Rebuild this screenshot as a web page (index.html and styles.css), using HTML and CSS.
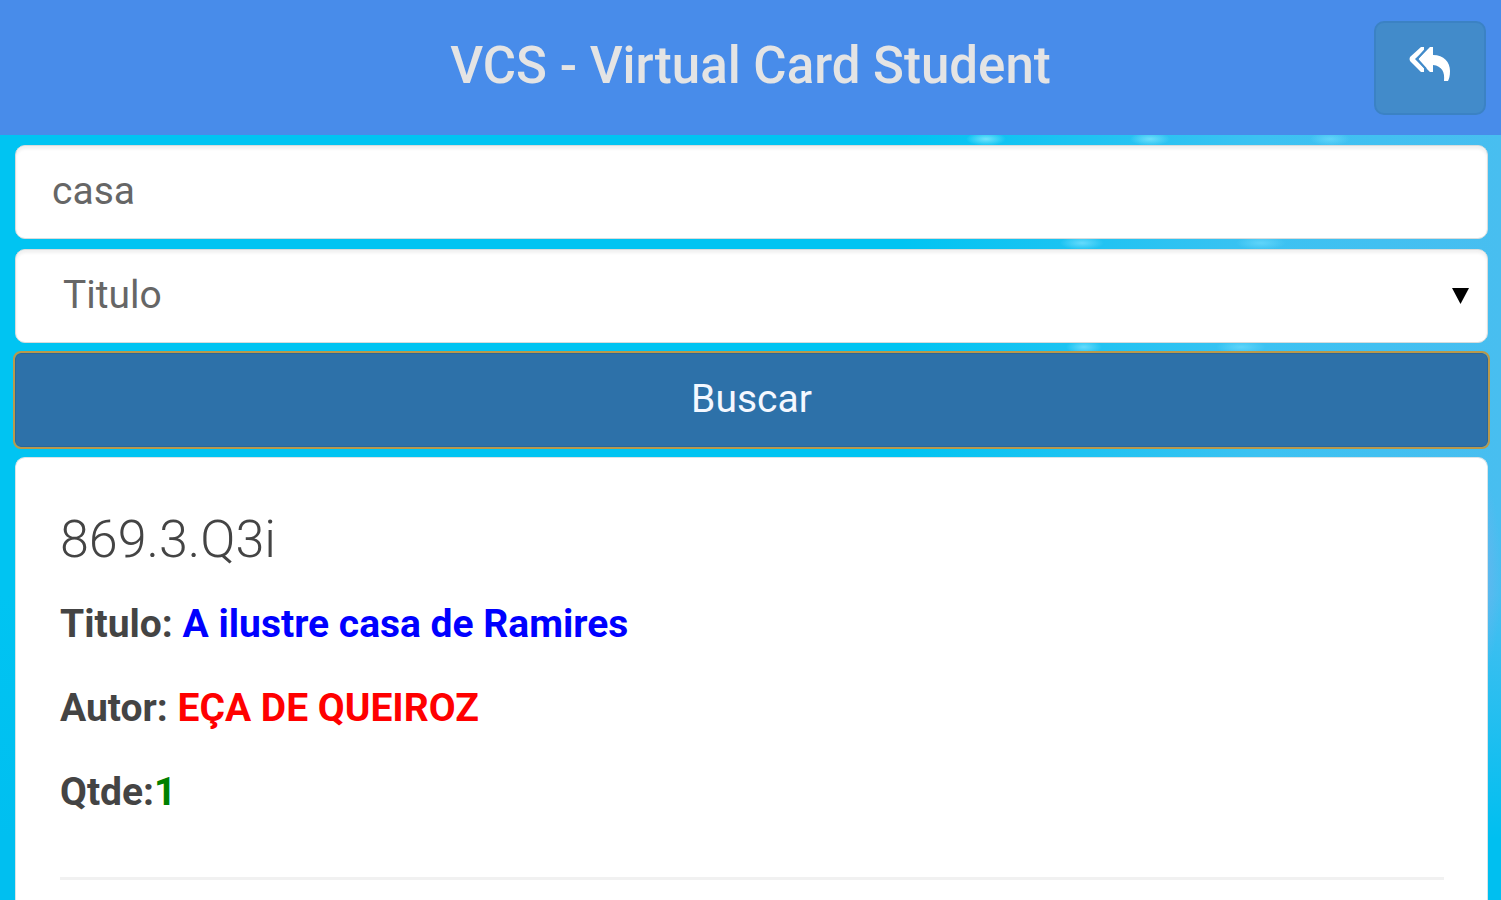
FILE: index.html
```html
<!DOCTYPE html>
<html lang="pt-BR">
<head>
    <meta charset="UTF-8">
    <meta name="viewport" content="width=device-width, initial-scale=1.0">
    <title>VCS - Virtual Card Student</title>
    <link rel="stylesheet" href="styles.css">
</head>
<body>
    <header class="navbar">
        <h1>VCS - Virtual Card Student</h1>
        <button type="button" class="btn-back" aria-label="Voltar">
            <svg viewBox="0 0 42 36" width="42" height="36" aria-hidden="true">
                <path fill="#fff" d="M15 1v4L6 13l9 9v4h-3L1 15q-1-2 0-4L12 1zM24 1v8c11 0 17 7 17 16 0 5-1 8-2 10h-4c1-9-2-15-11-16v7h-3L10 15q-1-2 0-3L21 1z"/>
                <path fill="none" stroke="#428bca" stroke-width="2" d="M17 3L8 13l9 10"/>
            </svg>
        </button>
    </header>
    <main class="container">
        <form class="search-form" action="#" method="get">
            <input type="text" class="form-control" name="busca" value="casa" aria-label="Busca">
            <div class="select-box">
                <select class="form-control" name="tipo" aria-label="Tipo de busca">
                    <option value="titulo">Titulo</option>
                    <option value="autor">Autor</option>
                </select>
                <span class="arrow"></span>
            </div>
            <button type="submit" class="btn-search">Buscar</button>
        </form>
        <section class="result">
            <h2>869.3.Q3i</h2>
            <p>Titulo: <span class="title">A ilustre casa de Ramires</span></p>
            <p>Autor: <span class="author">EÇA DE QUEIROZ</span></p>
            <p>Qtde:<span class="amount">1</span></p>
            <hr>
        </section>
    </main>
</body>
</html>
```

FILE: styles.css
```css
* {
    box-sizing: border-box;
}

body {
    font-family: Roboto, "Liberation Sans", sans-serif;
    font-size: 39px;
    color: #444;
    margin: 0;
    min-height: 100vh;
    display: flex;
    flex-direction: column;
    background-color: #00c4f2;
}

.navbar {
    background-color: #488cea;
    display: grid;
    grid-template-columns: 112px 1fr 112px;
    align-items: center;
    padding: 21px 15px 20px;
}

.navbar h1 {
    grid-column: 2;
    margin: 0;
    padding-bottom: 4px;
    font-size: 51px;
    line-height: 60px;
    font-weight: 500;
    text-align: center;
    color: #e4e4e4;
}

.btn-back {
    height: 94px;
    display: flex;
    justify-content: center;
    align-items: center;
    padding: 0 0 8px;
    background-color: #428bca;
    border: 2px solid #3b82c4;
    border-radius: 10px;
    cursor: pointer;
}

.container {
    flex: 1;
    display: flex;
    flex-direction: column;
    gap: 10px;
    padding: 10px 13px 0 15px;
    /* light streaks over the blue sky */
    background:
        radial-gradient(closest-side, rgba(140, 235, 255, 0.8), transparent) 966px -3px / 40px 14px no-repeat,
        radial-gradient(closest-side, rgba(140, 235, 255, 0.7), transparent) 1130px -3px / 40px 14px no-repeat,
        radial-gradient(closest-side, rgba(120, 225, 255, 0.6), transparent) 1310px -3px / 40px 14px no-repeat,
        radial-gradient(closest-side, rgba(120, 225, 255, 0.8), transparent) 1060px 101px / 44px 14px no-repeat,
        radial-gradient(closest-side, rgba(120, 225, 255, 0.6), transparent) 1236px 101px / 50px 14px no-repeat,
        radial-gradient(closest-side, rgba(120, 225, 255, 0.8), transparent) 1066px 205px / 36px 14px no-repeat,
        radial-gradient(closest-side, rgba(120, 225, 255, 0.6), transparent) 1216px 205px / 50px 14px no-repeat,
        radial-gradient(closest-side, rgba(110, 180, 238, 0.8), transparent) right 340px / 40px 200px no-repeat,
        linear-gradient(to bottom, transparent 60%, #00bff0 92%),
        linear-gradient(to right, #00c4f2 60%, #3cc2f2 84%, #48bef0);
}

.search-form {
    display: flex;
    flex-direction: column;
    gap: 10px;
}

.form-control {
    display: block;
    width: 100%;
    height: 94px;
    padding: 0 36px 3px;
    font-family: inherit;
    font-size: 39px;
    color: #666;
    background-color: #fff;
    border: 1px solid #d8dcdc;
    border-radius: 10px;
    box-shadow: inset 0 3px 3px rgba(0, 0, 0, 0.06);
}

.select-box {
    position: relative;
}

select.form-control {
    appearance: none;
    padding: 0 47px 3px;
}

.arrow {
    position: absolute;
    top: 39px;
    right: 19px;
    width: 17px;
    height: 16px;
    background-color: #000;
    clip-path: polygon(0 0, 100% 0, 50% 100%);
    pointer-events: none;
}

.btn-search {
    height: 94px;
    padding: 0 0 3px;
    font-family: inherit;
    font-size: 39px;
    color: #f4f8ff;
    background-color: #2d71a9;
    border: 1px solid #2b669a;
    border-radius: 6px;
    outline: 2px solid #b8994c;
    cursor: pointer;
}

.result {
    flex: 1;
    padding: 52px 43px 0 44px;
    background-color: #fff;
    border: 1px solid #d8e4e8;
    border-bottom: none;
    border-radius: 10px 10px 0 0;
}

.result h2 {
    margin: 0 0 30px;
    font-size: 52px;
    line-height: 60px;
    font-weight: 300;
}

.result p {
    margin: 0 0 36px;
    line-height: 48px;
    font-weight: 700;
}

.title {
    color: #0000ff;
}

.author {
    color: #ff0000;
}

.amount {
    color: #008000;
}

.result hr {
    margin: 61px 0 0;
    border: none;
    border-top: 3px solid #f1f1f1;
}
```
